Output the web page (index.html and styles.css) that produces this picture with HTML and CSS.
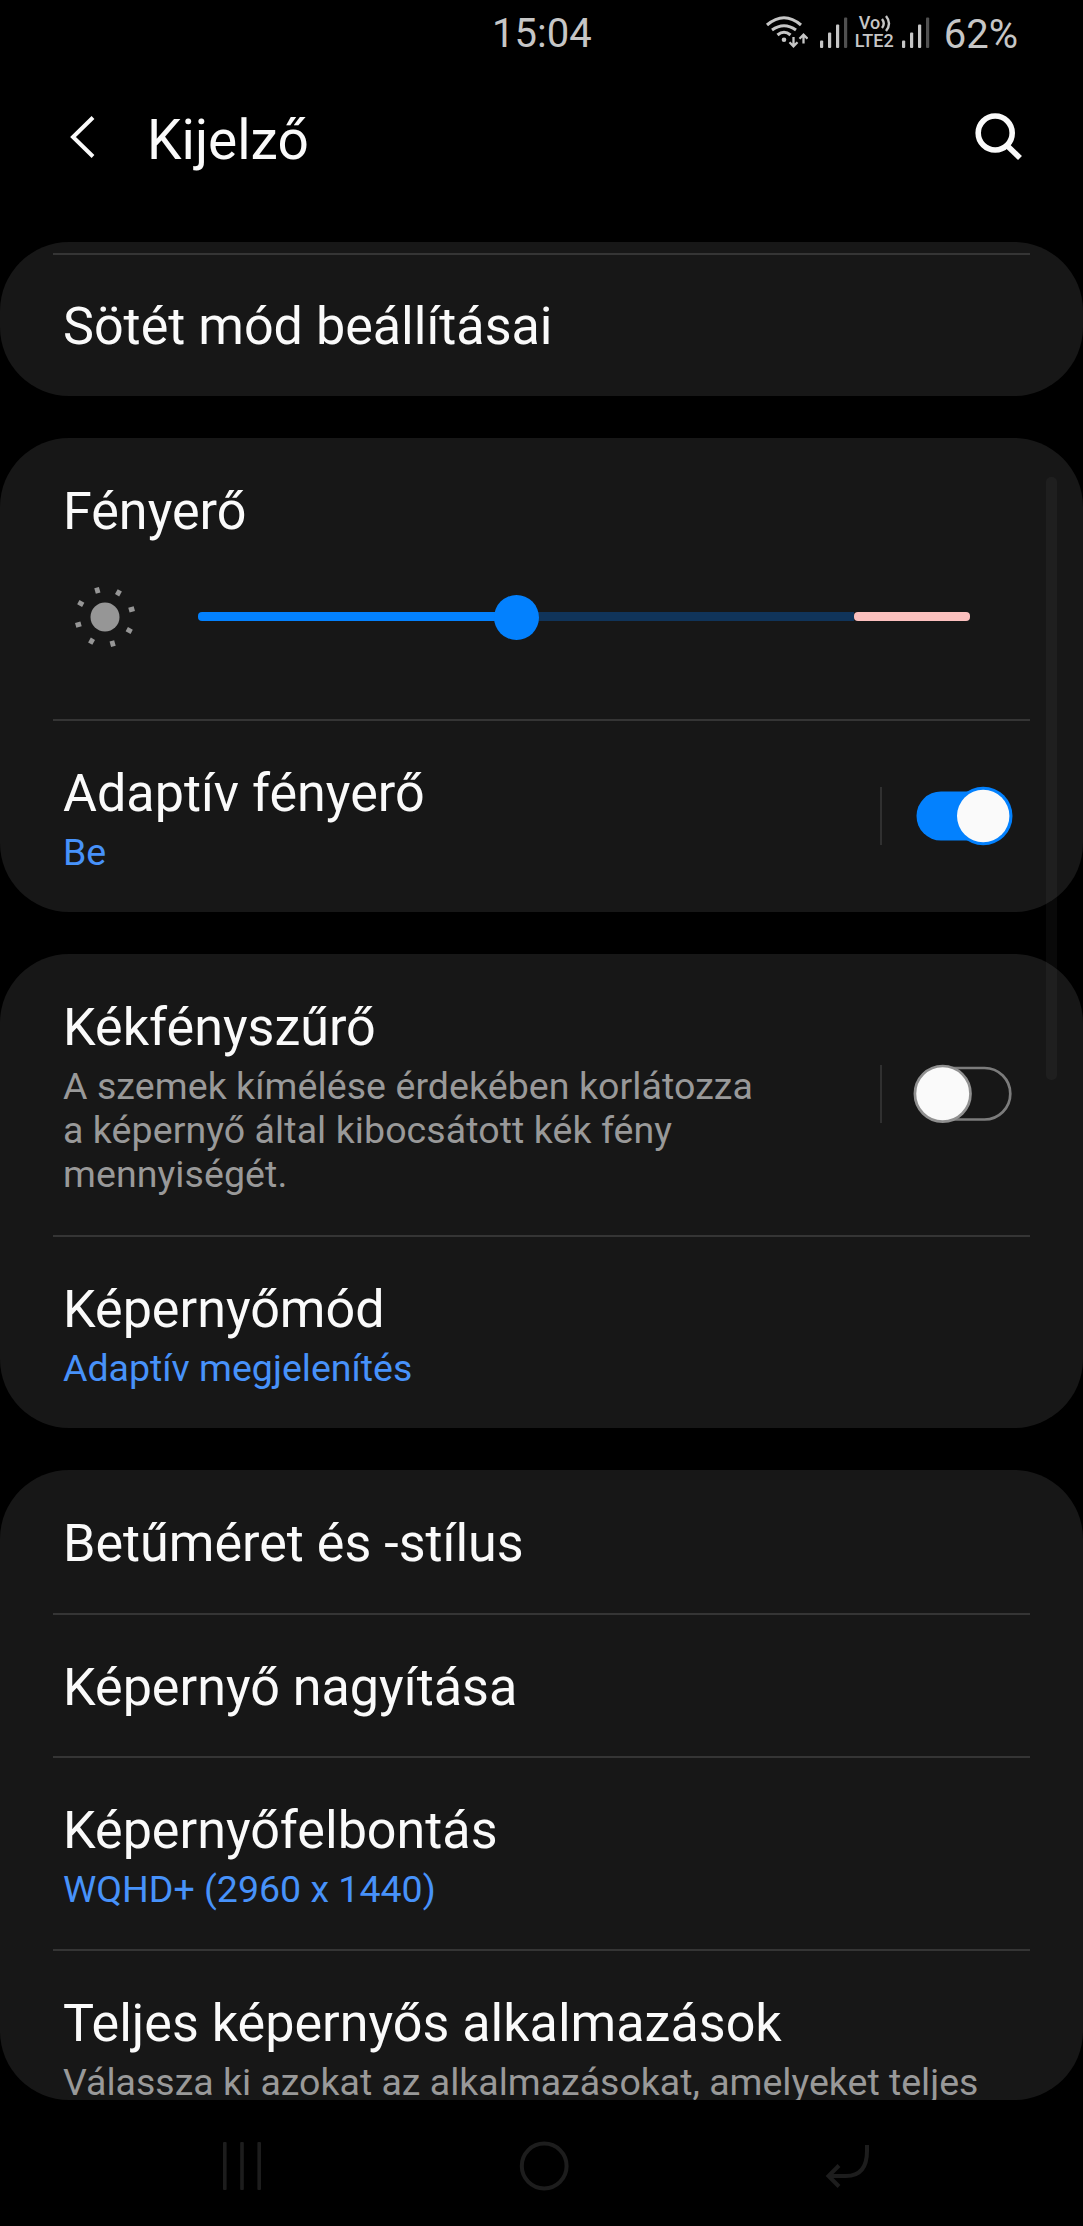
FILE: index.html
```html
<!DOCTYPE html>
<html lang="hu">
<head>
<meta charset="utf-8">
<title>Kijelző</title>
<link rel="stylesheet" href="styles.css">
</head>
<body>
<div class="screen">
  <header class="status">
    <span class="clock">15:04</span>
    <div class="indicators">
      <svg class="wifi" width="44" height="36" viewBox="764 14 44 36" fill="none" stroke="#c6c6c6" stroke-width="3.1">
        <path d="M767 25Q784 10.500 801 25"/>
        <path d="M772 30Q784 21.500 796 30"/>
        <path d="M777.500 35Q784 29.500 790.500 35"/>
        <circle cx="784" cy="39.700" r="2.300" fill="#c6c6c6" stroke="none"/>
        <path d="M793.500 37V46M789.500 42.200L793.500 46.300L797.500 42.200M803.500 43.500V35M799.500 38.700L803.500 34.600L807.500 38.700" stroke-width="2.300"/>
      </svg>
      <svg class="bars" width="28" height="32" viewBox="0 0 28 32" fill="#c6c6c6">
        <rect x="0" y="23.500" width="3.200" height="7.500" rx="1"/><rect x="8" y="15.500" width="3.200" height="15.500" rx="1"/><rect x="16" y="7.500" width="3.200" height="23.500" rx="1"/><rect x="24" y="0.500" width="3.200" height="30.500" rx="1" fill="#505050"/>
      </svg>
      <div class="lte">
        <span class="vo">Vo<svg width="12" height="18" viewBox="0 0 12 18" fill="none" stroke="#c6c6c6" stroke-width="2.400"><path d="M2 5Q5.500 9.500 2 14M6 2Q12 9.500 6 17"/></svg></span>
        <span>LTE2</span>
      </div>
      <svg class="bars second" width="28" height="32" viewBox="0 0 28 32" fill="#c6c6c6">
        <rect x="0" y="23.500" width="3.200" height="7.500" rx="1"/><rect x="8" y="15.500" width="3.200" height="15.500" rx="1"/><rect x="16" y="7.500" width="3.200" height="23.500" rx="1"/><rect x="24" y="0.500" width="3.200" height="30.500" rx="1" fill="#505050"/>
      </svg>
      <span class="battery">62%</span>
    </div>
  </header>

  <div class="appbar">
    <svg width="28" height="46" viewBox="0 0 28 46" fill="none" stroke="#fafafa" stroke-width="4"><path d="M25 3.500L5 23L25 42.500"/></svg>
    <h1>Kijelző</h1>
    <svg class="search" width="50" height="50" viewBox="974 111 50 50" fill="none" stroke="#fafafa" stroke-width="5.600"><circle cx="995.200" cy="133" r="17"/><path d="M1007 145.500L1020 158"/></svg>
  </div>

  <main class="list">
    <section class="card cut">
      <hr>
      <div class="row"><h2>Sötét mód beállításai</h2></div>
    </section>

    <section class="card">
      <div class="row brightness">
        <h2>Fényerő</h2>
        <div class="control">
          <svg width="64" height="64" viewBox="-32 -32 64 64" fill="#969696">
            <circle r="14.500"/>
            <g transform="rotate(-16)">
              <rect x="-2.400" y="-30.500" width="4.800" height="5.600"/>
              <rect x="-2.400" y="-30.500" width="4.800" height="5.600" transform="rotate(45)"/>
              <rect x="-2.400" y="-30.500" width="4.800" height="5.600" transform="rotate(90)"/>
              <rect x="-2.400" y="-30.500" width="4.800" height="5.600" transform="rotate(135)"/>
              <rect x="-2.400" y="-30.500" width="4.800" height="5.600" transform="rotate(180)"/>
              <rect x="-2.400" y="-30.500" width="4.800" height="5.600" transform="rotate(225)"/>
              <rect x="-2.400" y="-30.500" width="4.800" height="5.600" transform="rotate(270)"/>
              <rect x="-2.400" y="-30.500" width="4.800" height="5.600" transform="rotate(315)"/>
            </g>
          </svg>
          <div class="slider"><i class="fill"></i><i class="knob"></i><i class="rest"></i><i class="warn"></i></div>
        </div>
      </div>
      <hr>
      <div class="row toggle-row">
        <div class="text"><h2>Adaptív fényerő</h2><p class="value">Be</p></div>
        <div class="switch-area"><svg width="102" height="62" viewBox="912 784.500 102 62"><rect x="916.500" y="791" width="95" height="49" rx="24.500" fill="#0381fe"/><circle cx="983.200" cy="815.500" r="29.300" fill="#0381fe"/><circle cx="983.200" cy="815.500" r="26.200" fill="#fafafa"/></svg></div>
      </div>
    </section>

    <section class="card">
      <div class="row toggle-row tall">
        <div class="text"><h2>Kékfényszűrő</h2><p>A szemek kímélése érdekében korlátozza<br>a képernyő által kibocsátott kék fény<br>mennyiségét.</p></div>
        <div class="switch-area"><svg width="102" height="62" viewBox="912 1063.500 102 62"><rect x="918" y="1068.500" width="92.300" height="51.500" rx="25.750" fill="none" stroke="#7c7c7c" stroke-width="2.700"/><circle cx="942.700" cy="1094.300" r="27.800" fill="#fafafa" stroke="#909090" stroke-width="2.700"/></svg></div>
      </div>
      <hr>
      <div class="row double"><h2>Képernyőmód</h2><p class="value">Adaptív megjelenítés</p></div>
    </section>

    <section class="card last">
      <div class="row first"><h2>Betűméret és -stílus</h2></div>
      <hr>
      <div class="row"><h2>Képernyő nagyítása</h2></div>
      <hr>
      <div class="row double"><h2>Képernyőfelbontás</h2><p class="value">WQHD+ (2960 x 1440)</p></div>
      <hr>
      <div class="row double"><h2>Teljes képernyős alkalmazások</h2><p>Válassza ki azokat az alkalmazásokat, amelyeket teljes</p></div>
    </section>
    <div class="scrollbar"></div>
  </main>

  <nav class="navbar">
    <svg width="40" height="52" viewBox="0 0 40 52" fill="#1d1d1d"><rect x="1" y="2" width="3.600" height="48" rx="1"/><rect x="18.200" y="2" width="3.600" height="48" rx="1"/><rect x="35.400" y="2" width="3.600" height="48" rx="1"/></svg>
    <svg width="54" height="52" viewBox="0 0 54 52" fill="none" stroke="#1d1d1d" stroke-width="4"><circle cx="28.200" cy="26" r="22.400"/></svg>
    <svg width="46" height="52" viewBox="824 2140 46 52" fill="none" stroke="#1d1d1d" stroke-width="4"><path d="M867 2145V2151Q867 2176 846 2176H829M839 2165.500L828.500 2176L839 2186.500"/></svg>
  </nav>
</div>
</body>
</html>
```
FILE: styles.css
```css
* { box-sizing: border-box; margin: 0; padding: 0; }
body { background: #000; font-family: Roboto, "Liberation Sans", sans-serif; color: #fafafa; }
svg { display: block; flex: none; }
h1, h2 { font-weight: 400; white-space: nowrap; }

.screen { width: 1083px; height: 2226px; display: flex; flex-direction: column; overflow: hidden; background: #000; }

.status { height: 70px; display: flex; justify-content: space-between; padding: 0 65px 0 492px; color: #c6c6c6; font-size: 40px; line-height: 47px; }
.clock { padding-top: 10px; }
.indicators { display: flex; }
.wifi { margin-top: 14px; }
.bars { margin: 17px 0 0 12px; }
.bars.second { margin-left: 7px; }
.lte { display: flex; flex-direction: column; width: 40px; margin: 14px 0 0 7px; font-size: 18px; line-height: 18px; font-weight: 500; white-space: nowrap; }
.lte span { display: flex; }
.lte .vo { padding-left: 4px; }
.battery { padding: 11px 0 0 14px; }

.appbar { height: 172px; display: flex; align-items: flex-start; padding: 0 59px 0 68px; }
.appbar > svg:first-child { margin-top: 44px; }
.appbar h1 { flex: 1; font-size: 55px; line-height: 64px; margin: 38px 0 0 51px; }
.appbar .search { margin-top: 41px; }

.list { position: relative; height: 1858px; display: flex; flex-direction: column; gap: 42px; }
.card { flex: none; background: #171717; border-radius: 69px; overflow: hidden; }
.card.cut { height: 154px; padding-top: 10.500px; }
.card.cut .row { padding-top: 42px; }
.card.last { height: 630px; }
hr { height: 2px; margin: 0 53px; border: 0; background: #353535; }
.row { height: 141px; padding: 43px 63px 0; }
.row h2 { font-size: 52.080px; line-height: 60px; }
.row p { margin-top: 7px; font-size: 37.500px; line-height: 43.800px; color: #999; white-space: nowrap; }
.row p.value { color: #4792fa; }
.row.double { height: 191px; }
.row.first { height: 143px; padding-top: 44px; }
.brightness { height: 281px; padding-top: 44px; }
.control { display: flex; align-items: center; gap: 61px; height: 64px; margin: 43px 0 0 10px; }
.slider { display: flex; align-items: center; width: 772px; margin-top: -1px; }
.slider i { height: 8.500px; }
.slider .fill { width: 300px; background: #0381fe; border-radius: 4px 0 0 4px; }
.slider .knob { flex: none; z-index: 1; width: 45px; height: 45px; border-radius: 50%; background: #0381fe; margin: 1px -4px 0; }
.slider .rest { flex: 1; background: #10345a; }
.slider .warn { width: 116px; background: #fcc0be; border-radius: 4px; }
.toggle-row { display: flex; justify-content: space-between; align-items: flex-start; height: 191px; padding-right: 69px; }
.toggle-row.tall { height: 281px; padding-top: 44px; }
.tall p { letter-spacing: .080px; }
.switch-area { display: flex; align-items: center; height: 58px; padding-left: 30px; border-left: 2px solid #303030; margin-top: 23px; }
.tall .switch-area { margin-top: 67px; }
.scrollbar { position: absolute; left: 1046px; top: 235px; width: 11px; height: 603px; border-radius: 5px; background: rgba(255, 255, 255, .035); }

.navbar { flex: 1; display: flex; justify-content: space-between; align-items: flex-start; padding: 40px 213px 0 222px; }
```
